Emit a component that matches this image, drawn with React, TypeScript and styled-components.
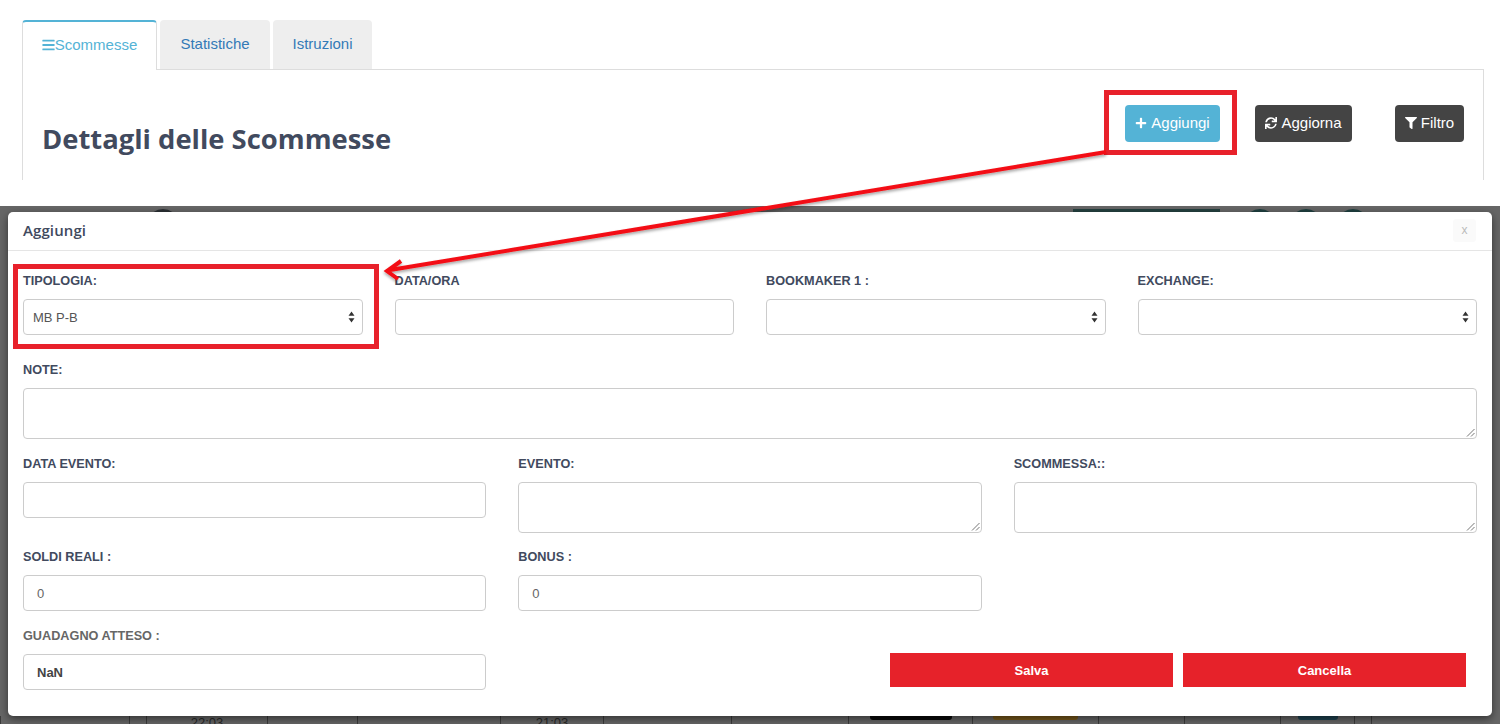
import React from 'react';
import styled, {createGlobalStyle} from 'styled-components';
import {FaBars, FaFilter, FaPlus, FaSync} from 'react-icons/fa';

const GlobalStyle = createGlobalStyle`
  html, body {
    margin: 0;
    padding: 0;
    background: #fff;
    font-family: "Liberation Sans", Arial, sans-serif;
  }
  * {
    box-sizing: border-box;
  }
`

const Page = styled.div`
  position: relative;
  width: 1500px;
  height: 724px;
  overflow: hidden;
  display: flex;
  flex-direction: column;
`

const TopArea = styled.div`
  flex: none;
  height: 206px;
  padding: 20px 16px 0 22px;
`

const TabBar = styled.div`
  display: flex;
  height: 50px;
  gap: 3px;
  border-bottom: 1px solid #ddd;
`

const Tab = styled.div<{ $active?: boolean; $width: number }>`
  display: flex;
  align-items: center;
  justify-content: center;
  height: ${p => p.$active ? '50px' : '49px'};
  width: ${p => p.$width}px;
  font-size: 15px;
  padding-bottom: 3px;
  border-radius: 4px 4px 0 0;
  color: ${p => p.$active ? '#54b3d6' : '#337ab7'};
  background: ${p => p.$active ? '#fff' : '#eee'};
  border-top: ${p => p.$active ? '2px solid #54b3d6' : 'none'};
  border-left: ${p => p.$active ? '1px solid #ddd' : 'none'};
  border-right: ${p => p.$active ? '1px solid #ddd' : 'none'};

  svg {
    width: 13px;
    height: 14px;
  }
`

const TabPanel = styled.div`
  height: 110px;
  border-left: 1px solid #ddd;
  border-right: 1px solid #ddd;
  display: flex;
  padding: 35px 19px 0 19px;
`

const Heading = styled.h1`
  flex: 1;
  margin: 16px 0 0;
  font-family: "Open Sans", sans-serif;
  font-size: 27.4px;
  line-height: 36px;
  font-weight: 700;
  color: #414a5e;
`

const ActionButton = styled.button<{ $info?: boolean; $gap: number; $width: number }>`
  display: inline-flex;
  align-items: center;
  justify-content: center;
  gap: 4px;
  height: 37px;
  width: ${p => p.$width}px;
  margin-left: ${p => p.$gap}px;
  border: none;
  border-radius: 4px;
  padding: 0 0 2px;
  font-family: inherit;
  font-size: 15px;
  color: #fff;
  background: ${p => p.$info ? '#54b3d6' : '#444'};

  svg {
    width: 12px;
    height: 12px;
  }
`

const Backdrop = styled.div`
  flex: 1;
  min-height: 0;
  display: flex;
  flex-direction: column;
  background: #666;
`

const TopPeek = styled.div`
  flex: none;
  height: 6px;
  overflow: hidden;
  display: flex;
  align-items: flex-start;
  padding: 3px 0 0 147px;
`

const PeekDot = styled.span<{ $gap: number; $color?: string }>`
  display: block;
  flex: none;
  width: 32px;
  height: 32px;
  margin-left: ${p => p.$gap}px;
  border-radius: 50%;
  background: ${p => p.$color || '#2b2f33'};
`

const PeekBar = styled.span<{ $gap: number; $width: number }>`
  display: block;
  flex: none;
  width: ${p => p.$width}px;
  height: 20px;
  margin-left: ${p => p.$gap}px;
  background: #24403f;
`

const Modal = styled.div`
  flex: none;
  position: relative;
  z-index: 1;
  margin: 0 8px;
  height: 504px;
  background: #fff;
  border-radius: 5px;
  box-shadow: 0 3px 9px rgba(0, 0, 0, .5);
  display: flex;
  flex-direction: column;
`

const ModalHeader = styled.div`
  height: 39px;
  display: flex;
  align-items: center;
  justify-content: space-between;
  padding: 0 16px 2px 15px;
  border-bottom: 1px solid #e5e5e5;
`

const ModalTitle = styled.span`
  font-family: "Open Sans", sans-serif;
  font-size: 15px;
  font-weight: 600;
  letter-spacing: 0.1px;
  color: #414a5e;
`

const CloseButton = styled.span`
  width: 23px;
  height: 23px;
  display: flex;
  align-items: center;
  justify-content: center;
  border-radius: 3px;
  background: #fafafa;
  color: #bbb;
  font-size: 12px;
`

const ModalBody = styled.div`
  padding: 22px 15px 0;
  display: flex;
  flex-direction: column;
`

const FieldRow = styled.div<{ $cols: number; $after: number }>`
  display: grid;
  grid-template-columns: repeat(${p => p.$cols}, 1fr);
  column-gap: 32px;
  margin-bottom: ${p => p.$after}px;
`

const Field = styled.div`
  display: flex;
  flex-direction: column;
`

const Label = styled.label<{ $muted?: boolean }>`
  font-size: 12.7px;
  line-height: 16px;
  font-weight: 700;
  margin-bottom: 10px;
  color: ${p => p.$muted ? '#666' : '#414a5e'};
`

const Input = styled.div<{ $bold?: boolean }>`
  display: flex;
  align-items: center;
  height: 36px;
  padding: 0 12px 0 13px;
  border: 1px solid #ccc;
  border-radius: 4px;
  background: #fff;
  font-size: 13px;
  font-weight: ${p => p.$bold ? 700 : 400};
  color: ${p => p.$bold ? '#444' : '#666'};
`

const TextArea = styled.div`
  position: relative;
  height: 51px;
  border: 1px solid #ccc;
  border-radius: 4px;
  background: #fff;
`

const ResizeHandle = styled.svg`
  position: absolute;
  right: 1px;
  bottom: 1px;
  width: 9px;
  height: 9px;
`

const Select = styled(Input)`
  justify-content: space-between;
  padding: 0 7px 0 9px;
  color: #555;
`

const LastRow = styled.div`
  display: flex;
  align-items: flex-end;
  justify-content: space-between;
`

const LastField = styled(Field)`
  width: 463px;
`

const FormActions = styled.div`
  display: flex;
  gap: 10px;
  margin: 0 11px 3px 0;
`

const RedButton = styled.button`
  width: 283px;
  height: 34px;
  border: none;
  padding: 0;
  background: #e6222a;
  color: #fff;
  font-family: inherit;
  font-size: 13px;
  font-weight: 700;
`

const BottomPeek = styled.div`
  flex: 1;
  min-height: 0;
  display: flex;
  overflow: hidden;
`

const PeekCell = styled.div<{ $width: number }>`
  flex: none;
  width: ${p => p.$width}px;
  display: flex;
  justify-content: center;
  border-left: 1px solid #3c3c3c;
  color: #2a2a2a;
  font-size: 13px;
  line-height: 13px;
`

const PeekPill = styled.span<{ $width: number; $color: string }>`
  display: block;
  width: ${p => p.$width}px;
  height: 4px;
  border-radius: 0 0 3px 3px;
  background: ${p => p.$color};
`

const Callout = styled.div<{ $left: number; $top: number; $width: number; $height: number }>`
  position: absolute;
  z-index: 2;
  left: ${p => p.$left}px;
  top: ${p => p.$top}px;
  width: ${p => p.$width}px;
  height: ${p => p.$height}px;
  border: 5px solid #e8212b;
`

const ArrowLayer = styled.svg`
  position: absolute;
  z-index: 3;
  left: 0;
  top: 0;
  width: 1500px;
  height: 724px;
  pointer-events: none;
`

const peekCells: { width: number; text?: string; pill?: { width: number; color: string } }[] = [
    {width: 129},
    {width: 17},
    {width: 121, text: '22:03'},
    {width: 90},
    {width: 143},
    {width: 103, text: '21:03'},
    {width: 128},
    {width: 117},
    {width: 124, pill: {width: 82, color: '#0a0a0a'}},
    {width: 126, pill: {width: 85, color: '#7a5a1c'}},
    {width: 86},
    {width: 96},
    {width: 74, pill: {width: 40, color: '#1f4452'}},
    {width: 17},
    {width: 129},
]

const Resize = () => (
    <ResizeHandle viewBox="0 0 9 9">
        <path d="M1 8.5 8.5 1M5 8.5 8.5 5" stroke="#777" strokeWidth="1" fill="none"/>
    </ResizeHandle>
)

const Arrows = () => (
    <svg width="7" height="12" viewBox="0 0 7 12">
        <path d="M3.5 0.5 6.5 4.8H.5zM3.5 11.5 .5 7.2h6z" fill="#333"/>
    </svg>
)

const App: React.FC = () => {
    return (
        <Page>
            <GlobalStyle/>
            <TopArea>
                <TabBar>
                    <Tab $active $width={135}><FaBars/>Scommesse</Tab>
                    <Tab $width={110}>Statistiche</Tab>
                    <Tab $width={99}>Istruzioni</Tab>
                </TabBar>
                <TabPanel>
                    <Heading>Dettagli delle Scommesse</Heading>
                    <ActionButton $info $width={95} $gap={0}><FaPlus/>Aggiungi</ActionButton>
                    <ActionButton $width={97} $gap={35}><FaSync/>Aggiorna</ActionButton>
                    <ActionButton $width={69} $gap={43}><FaFilter/>Filtro</ActionButton>
                </TabPanel>
            </TopArea>
            <Backdrop>
                <TopPeek>
                    <PeekDot $gap={0}/>
                    <PeekBar $gap={894} $width={147}/>
                    <PeekDot $gap={24} $color="#1f3f3f"/>
                    <PeekDot $gap={14} $color="#1f3f3f"/>
                    <PeekDot $gap={15} $color="#1f3f3f"/>
                </TopPeek>
                <Modal>
                    <ModalHeader>
                        <ModalTitle>Aggiungi</ModalTitle>
                        <CloseButton>x</CloseButton>
                    </ModalHeader>
                    <ModalBody>
                        <FieldRow $cols={4} $after={27}>
                            <Field>
                                <Label>TIPOLOGIA:</Label>
                                <Select>MB P-B<Arrows/></Select>
                            </Field>
                            <Field>
                                <Label>DATA/ORA</Label>
                                <Input/>
                            </Field>
                            <Field>
                                <Label>BOOKMAKER 1 :</Label>
                                <Select><span/><Arrows/></Select>
                            </Field>
                            <Field>
                                <Label>EXCHANGE:</Label>
                                <Select><span/><Arrows/></Select>
                            </Field>
                        </FieldRow>
                        <FieldRow $cols={1} $after={17}>
                            <Field>
                                <Label>NOTE:</Label>
                                <TextArea><Resize/></TextArea>
                            </Field>
                        </FieldRow>
                        <FieldRow $cols={3} $after={16}>
                            <Field>
                                <Label>DATA EVENTO:</Label>
                                <Input/>
                            </Field>
                            <Field>
                                <Label>EVENTO:</Label>
                                <TextArea><Resize/></TextArea>
                            </Field>
                            <Field>
                                <Label>SCOMMESSA::</Label>
                                <TextArea><Resize/></TextArea>
                            </Field>
                        </FieldRow>
                        <FieldRow $cols={3} $after={17}>
                            <Field>
                                <Label>SOLDI REALI :</Label>
                                <Input>0</Input>
                            </Field>
                            <Field>
                                <Label>BONUS :</Label>
                                <Input>0</Input>
                            </Field>
                        </FieldRow>
                        <LastRow>
                            <LastField>
                                <Label $muted>GUADAGNO ATTESO :</Label>
                                <Input $bold>NaN</Input>
                            </LastField>
                            <FormActions>
                                <RedButton>Salva</RedButton>
                                <RedButton>Cancella</RedButton>
                            </FormActions>
                        </LastRow>
                    </ModalBody>
                </Modal>
                <BottomPeek>
                    {peekCells.map((cell, i) => (
                        <PeekCell key={i} $width={cell.width}>
                            {cell.text}
                            {cell.pill && <PeekPill $width={cell.pill.width} $color={cell.pill.color}/>}
                        </PeekCell>
                    ))}
                </BottomPeek>
            </Backdrop>
            <Callout $left={1104} $top={90} $width={133} $height={65}/>
            <Callout $left={13} $top={264} $width={366} $height={85}/>
            <ArrowLayer viewBox="0 0 1500 724">
                <defs>
                    <filter id="arrowShadow" x="-5%" y="-20%" width="110%" height="150%">
                        <feDropShadow dx="0" dy="2" stdDeviation="1.5" floodColor="#000" floodOpacity=".35"/>
                    </filter>
                </defs>
                <g filter="url(#arrowShadow)" fill="none" stroke="#f30c12" strokeWidth="4">
                    <path d="M1106 152 390 270"/>
                    <path d="M401 261 387 271 398 279"/>
                </g>
            </ArrowLayer>
        </Page>
    )
}
export default App;
